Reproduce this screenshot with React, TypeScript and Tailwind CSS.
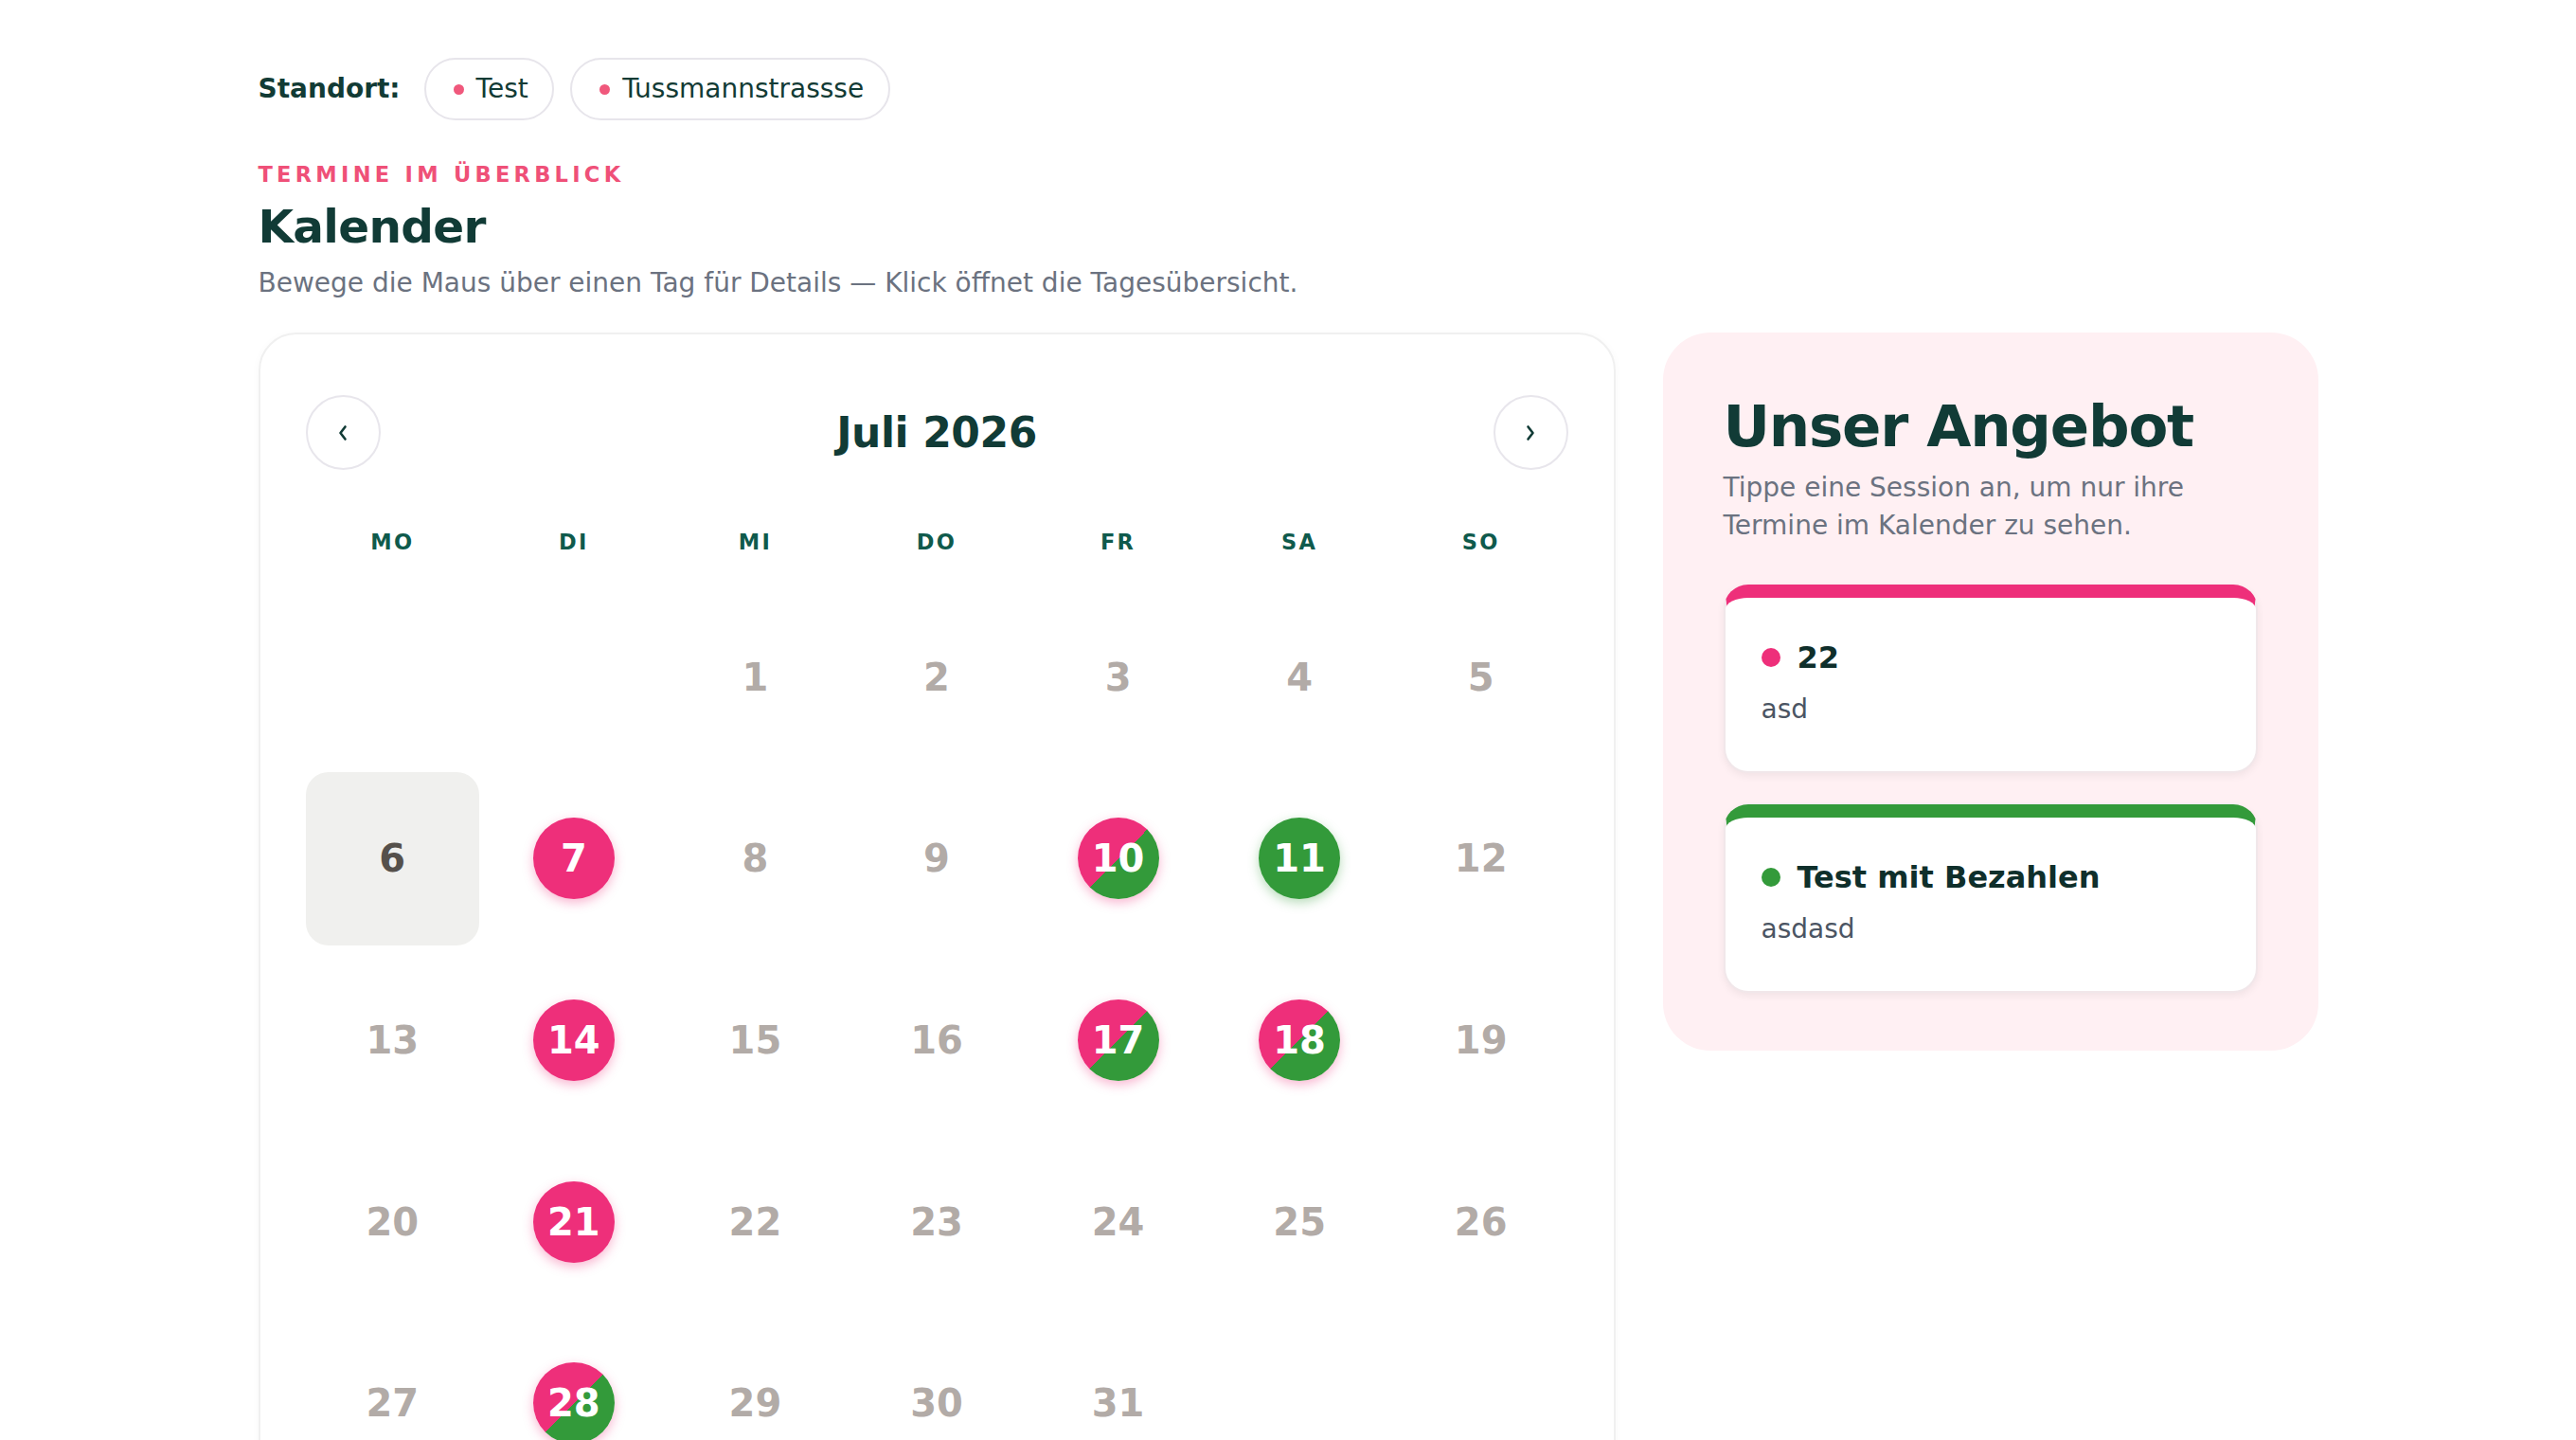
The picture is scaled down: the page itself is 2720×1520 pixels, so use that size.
import React from "react";

type Kind = "pink" | "green" | "split" | "today" | undefined;

const events: Record<number, Kind> = {
  6: "today",
  7: "pink",
  10: "split",
  11: "green",
  14: "pink",
  17: "split",
  18: "split",
  21: "pink",
  28: "split",
};

function DayCell({ day }: { day: number | null }) {
  if (day === null) return <div className="aspect-square" />;
  const kind = events[day];
  if (kind === "today") {
    return (
      <div className="aspect-square rounded-[24px] bg-[#f0f0ee] flex items-center justify-center">
        <span className="text-[40px] font-bold leading-none text-[#55504b]">{day}</span>
      </div>
    );
  }
  if (kind === "pink" || kind === "green" || kind === "split") {
    const cls =
      kind === "pink"
        ? "bg-[#ee2f7a] shadow-[0_4px_12px_rgba(238,47,122,0.35)]"
        : kind === "green"
        ? "bg-[#339a3a] shadow-[0_4px_12px_rgba(51,154,58,0.35)]"
        : "bg-[linear-gradient(135deg,#ee2f7a_50%,#339a3a_50%)] shadow-[0_4px_12px_rgba(238,47,122,0.35)]";
    return (
      <div className="aspect-square flex items-center justify-center">
        <div className={`w-[86px] h-[86px] rounded-full flex items-center justify-center ${cls}`}>
          <span className="text-[40px] font-bold leading-none text-white">{day}</span>
        </div>
      </div>
    );
  }
  return (
    <div className="aspect-square flex items-center justify-center">
      <span className="text-[40px] font-bold leading-none text-[#b2aba7]">{day}</span>
    </div>
  );
}

function Chevron({ dir }: { dir: "left" | "right" }) {
  return (
    <svg width="14" height="20" viewBox="0 0 14 20" fill="none">
      <path
        d={dir === "left" ? "M9.5 3.5 L4.5 10 L9.5 16.5" : "M4.5 3.5 L9.5 10 L4.5 16.5"}
        stroke="#113b36"
        strokeWidth="2.6"
        strokeLinecap="round"
        strokeLinejoin="round"
      />
    </svg>
  );
}

function Chip({ label }: { label: string }) {
  return (
    <div className="h-[66px] flex items-center rounded-full border-2 border-[#e7e5eb] bg-white pl-[29px] pr-[25.5px]">
      <span className="w-[11px] h-[11px] rounded-full bg-[#f0587c]" />
      <span className="ml-[13px] text-[28px] leading-none text-[#123b35]">{label}</span>
    </div>
  );
}

function SessionCard({ color, dot, title, sub }: { color: string; dot: string; title: string; sub: string }) {
  return (
    <div
      className={`rounded-[26px] border-2 border-[#f1e7ea] border-t-[14px] bg-white shadow-[0_3px_8px_rgba(0,0,0,0.06)] pl-[38px] pr-[38px] pt-[41px] pb-[45px] ${color}`}
    >
      <div className="flex items-center h-[44px]">
        <span className={`w-[20px] h-[20px] rounded-full ${dot}`} />
        <span className="ml-[18px] text-[32px] font-bold leading-[44px] text-[#0f2f2b]">{title}</span>
      </div>
      <div className="mt-[13px] text-[28px] leading-[40px] text-[#4b5563]">{sub}</div>
    </div>
  );
}

export default function App() {
  const cells: (number | null)[] = [null, null];
  for (let d = 1; d <= 31; d++) cells.push(d);
  while (cells.length % 7 !== 0) cells.push(null);
  const weekdays = ["MO", "DI", "MI", "DO", "FR", "SA", "SO"];

  return (
    <div className="min-h-screen bg-white font-['DejaVu_Sans',sans-serif]">
      <div className="mx-auto w-[2175px] pt-[61px] pb-[80px]">
        <div className="flex items-center">
          <span className="text-[28px] font-bold text-[#123b35] leading-none">Standort:</span>
          <div className="ml-[25px] flex items-center gap-[17px]">
            <Chip label="Test" />
            <Chip label="Tussmannstrassse" />
          </div>
        </div>

        <div className="mt-[42px] text-[22.5px] leading-[30px] font-bold tracking-[0.19em] text-[#ef5078]">
          TERMINE IM ÜBERBLICK
        </div>
        <h1 className="mt-[11px] text-[48.5px] leading-[58px] font-bold tracking-[-0.015em] text-[#113b36]">
          Kalender
        </h1>
        <p className="mt-[11px] text-[28px] leading-[40px] text-[#6b7280]">
          Bewege die Maus über einen Tag für Details — Klick öffnet die Tagesübersicht.
        </p>

        <div className="mt-[32px] flex items-start gap-[50px]">
          <div className="w-[1433px] shrink-0 rounded-[40px] border-2 border-[#f0f0f0] bg-white shadow-[0_2px_10px_rgba(0,0,0,0.03)] px-[48px] pt-[64px] pb-[48px]">
            <div className="flex items-center justify-between">
              <button className="w-[79px] h-[79px] rounded-full border-2 border-[#e8e6ec] bg-white flex items-center justify-center">
                <Chevron dir="left" />
              </button>
              <div className="text-[44px] font-bold leading-none tracking-[-0.01em] text-[#113b36]">Juli 2026</div>
              <button className="w-[79px] h-[79px] rounded-full border-2 border-[#e8e6ec] bg-white flex items-center justify-center">
                <Chevron dir="right" />
              </button>
            </div>

            <div className="mt-[61px] grid grid-cols-7 gap-x-[8px]">
              {weekdays.map((w) => (
                <div
                  key={w}
                  className="text-center text-[22.5px] leading-[30px] font-bold tracking-[0.1em] text-[#0f5a4c]"
                >
                  {w}
                </div>
              ))}
            </div>

            <div className="mt-[36px] grid grid-cols-7 gap-[8px]">
              {cells.map((d, i) => (
                <DayCell key={i} day={d} />
              ))}
            </div>
          </div>

          <div className="w-[692px] shrink-0 rounded-[50px] bg-[#fff0f3] px-[64px] pt-[62px] pb-[61px]">
            <h2 className="text-[61px] leading-[73px] font-bold tracking-[-0.02em] text-[#113b36]">Unser Angebot</h2>
            <p className="mt-[9px] text-[28px] leading-[40px] text-[#6b7280]">
              Tippe eine Session an, um nur ihre Termine im Kalender zu sehen.
            </p>
            <div className="mt-[42px] flex flex-col gap-[33px]">
              <SessionCard color="border-t-[#ee2f7a]" dot="bg-[#ee2f7a]" title="22" sub="asd" />
              <SessionCard color="border-t-[#339a3a]" dot="bg-[#339a3a]" title="Test mit Bezahlen" sub="asdasd" />
            </div>
          </div>
        </div>
      </div>
    </div>
  );
}
